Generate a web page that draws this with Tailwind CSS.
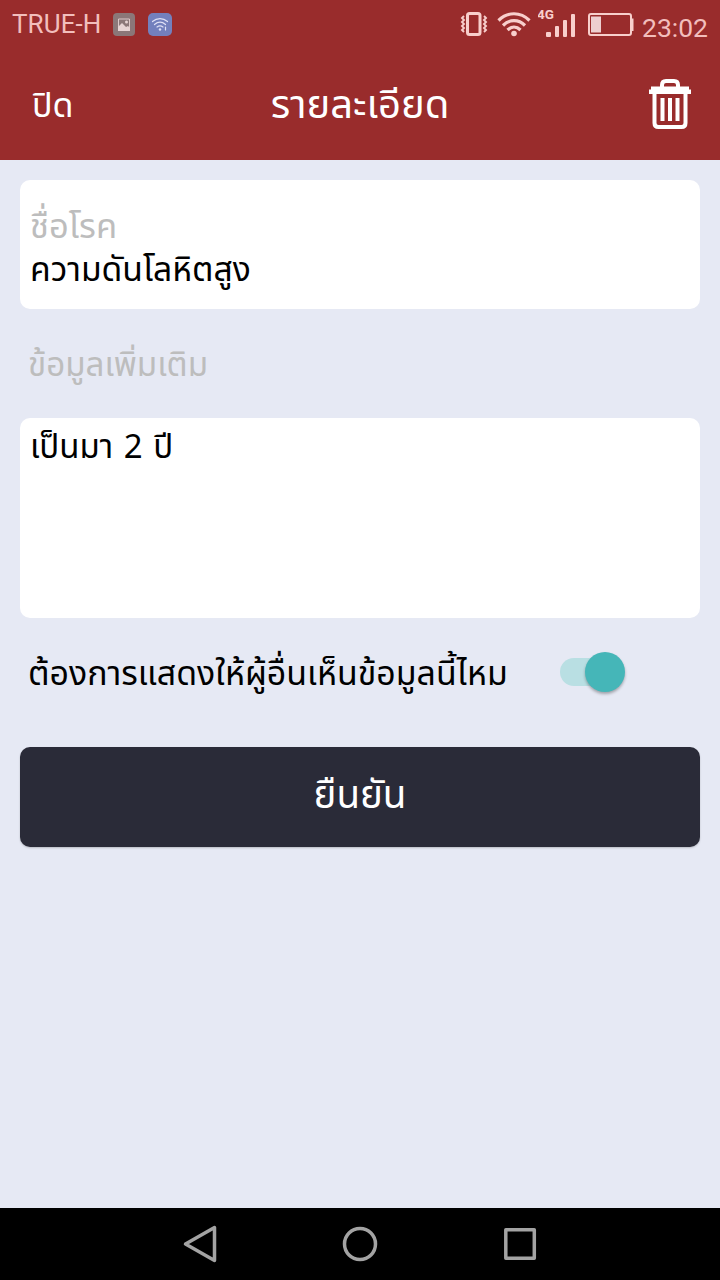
<!DOCTYPE html>
<html lang="th">
<head>
    <meta charset="UTF-8">
    <meta name="viewport" content="width=device-width, initial-scale=1.0">
    <title>รายละเอียด</title>
    <script src="https://cdn.jsdelivr.net/npm/@tailwindcss/browser@4"></script>
</head>
<body class="w-[720px] h-[1280px] flex flex-col overflow-hidden bg-[#e6e9f4] font-['Noto_Sans_Thai','Noto_Sans',sans-serif] text-black">
    <header class="h-40 shrink-0 bg-[#992c2c]">
        <!-- Status bar -->
        <div class="h-12 flex items-center text-[#f2bebc] font-['Roboto',sans-serif]">
            <span class="w-[88px] ml-3 text-[26px] leading-[48px] tracking-[0.1px] whitespace-nowrap">TRUE-H</span>
            <svg class="ml-[13px] w-[22px] h-[23px]" viewBox="0 0 22 23">
                <rect width="22" height="23" rx="4" fill="#8b7778"/>
                <path d="M5.500 6h11v11h-11z" fill="none" stroke="#dcc8c8" stroke-width="1"/>
                <path d="M5 14l4-4 4 4 2-1 2 2v3H5z" fill="#e6d3d3"/>
                <circle cx="13.500" cy="9" r="1.500" fill="#e6d3d3"/>
            </svg>
            <svg class="ml-[13px] w-6 h-[23px]" viewBox="0 0 24 23">
                <rect width="24" height="23" rx="5" fill="#7380bd"/>
                <g fill="none" stroke="#dfe0f5" stroke-width="1.200" stroke-linecap="round">
                    <path d="M4.500 8.500c4.500-3.800 10.500-3.800 15 0M6.500 11.500c3.500-2.900 7.500-2.900 11 0M9 14c2-1.500 4-1.500 6 0M17.500 14v3"/>
                </g>
                <circle cx="12" cy="16.500" r="1.200" fill="#dfe0f5"/>
            </svg>

            <svg class="ml-[288px] w-[28px] h-[26px]" viewBox="0 0 28 26" fill="none" stroke="#f8cfcc">
                <rect x="7.500" y="2.500" width="12.500" height="21" rx="2" stroke-width="3"/>
                <path d="M4 5l-2 2 2 2-2 2 2 2-2 2 2 2-2 2 2 2M24 5l2 2-2 2 2 2-2 2 2 2-2 2 2 2-2 2" stroke-width="1.900"/>
            </svg>
            <svg class="ml-[9px] w-[34px] h-[26px]" viewBox="0 0 34 26" fill="none" stroke="#f8cfcc" stroke-width="3.200">
                <path d="M1.500 9.500c9-9 22-9 31 0M6 14.500c6.500-6.500 15.500-6.500 22 0M10.500 19c4-3.800 9-3.800 13 0"/>
                <circle cx="17" cy="22.500" r="2.800" fill="#f8cfcc" stroke="none"/>
            </svg>
            <svg class="ml-[7px] w-10 h-8 mb-[7px]" viewBox="0 0 40 32" fill="#f8cfcc">
                <text x="-1" y="14" font-family="Roboto" font-size="13.500" font-weight="700">4G</text>
                <rect x="8" y="27" width="5" height="5" rx="1"/>
                <rect x="17" y="21" width="4" height="11" rx="1"/>
                <rect x="25" y="15" width="4" height="17" rx="1"/>
                <rect x="33" y="9" width="4" height="23" rx="1"/>
            </svg>
            <svg class="ml-[10px] w-[46px] h-[23px]" viewBox="0 0 46 23">
                <rect x="1" y="1" width="42" height="21" rx="2" fill="none" stroke="#f8cfcc" stroke-width="2"/>
                <rect x="3" y="3.500" width="10" height="16" fill="#edcfd0"/>
                <path d="M43 6.500h1.500V17H43" fill="none" stroke="#f8cfcc" stroke-width="2"/>
            </svg>
            <span class="ml-2 mt-2 text-[26.5px] leading-10 whitespace-nowrap">23:02</span>
        </div>
        <!-- Title bar -->
        <div class="h-28 grid grid-cols-3 items-center text-white">
            <a href="#" class="pl-8 pt-1 text-[34px]">ปิด</a>
            <h1 class="text-center pt-1 text-[40px] leading-[52px] whitespace-nowrap">รายละเอียด</h1>
            <button class="justify-self-end mr-7" aria-label="ลบ">
                <svg class="w-11 h-[52px]" viewBox="0 0 44 52" fill="none" stroke="#fff">
                    <path d="M14 10V7q0-4 4-4h8q4 0 4 4v3" stroke-width="4"/>
                    <path d="M3 8.500h38v3h2v4.500H1v-4.500h2z" fill="#fff" stroke="none"/>
                    <path d="M6.500 15v30q0 4 4 4h23q4 0 4-4V15" stroke-width="4"/>
                    <path d="M14.500 20v23M22 20v23M29.500 20v23" stroke-width="4"/>
                </svg>
            </button>
        </div>
    </header>

    <main class="flex-1 px-5 pt-5">
        <div class="h-[129px] rounded-[10px] bg-white px-[10px] pt-[26px]">
            <label class="block h-[43px] leading-[43px] text-[34.5px] text-[#bdbdbd] whitespace-nowrap">ชื่อโรค</label>
            <p class="h-[43px] leading-[43px] text-[33.7px] whitespace-nowrap">ความดันโลหิตสูง</p>
        </div>
        <p class="h-[109px] leading-[115px] pl-2 text-[33.2px] text-[#bdbdbd] whitespace-nowrap">ข้อมูลเพิ่มเติม</p>
        <div class="h-[200px] rounded-[10px] bg-white px-[10px] pt-[9px]">
            <p class="leading-[43px] text-[33px] [word-spacing:2px] whitespace-nowrap">เป็นมา 2 ปี</p>
        </div>
        <div class="h-[129px] flex items-start pl-2">
            <span class="w-[532px] mt-[35px] leading-[43px] text-[33.9px] whitespace-nowrap">ต้องการแสดงให้ผู้อื่นเห็นข้อมูลนี้ไหม</span>
            <div class="mt-10 w-16 h-7 rounded-full bg-[#b9dfe3] flex items-center justify-end">
                <span class="w-10 h-10 -mr-[1px] shrink-0 rounded-full bg-[#45b6b8] shadow-[0_2px_3px_rgba(0,0,0,0.3)]"></span>
            </div>
        </div>
        <button class="block w-full h-[100px] rounded-[10px] bg-[#2a2b38] text-white text-[38.5px] shadow-[0_1px_2px_rgba(0,0,0,0.2)]">ยืนยัน</button>
    </main>

    <nav class="h-[72px] shrink-0 bg-black flex items-center justify-center gap-[120px]">
        <svg class="w-10 h-10" viewBox="0 0 40 40" fill="none" stroke="#a3a3a3" stroke-width="3.500" stroke-linejoin="round">
            <path d="M34.500 3.500v33L5.500 20z"/>
        </svg>
        <svg class="w-10 h-10" viewBox="0 0 40 40" fill="none" stroke="#a3a3a3" stroke-width="3.500">
            <circle cx="20" cy="20" r="15.500"/>
        </svg>
        <svg class="w-10 h-10" viewBox="0 0 40 40" fill="none" stroke="#a3a3a3" stroke-width="3.500" stroke-linejoin="round">
            <rect x="5.800" y="5.800" width="28.500" height="28.500"/>
        </svg>
    </nav>
</body>
</html>
